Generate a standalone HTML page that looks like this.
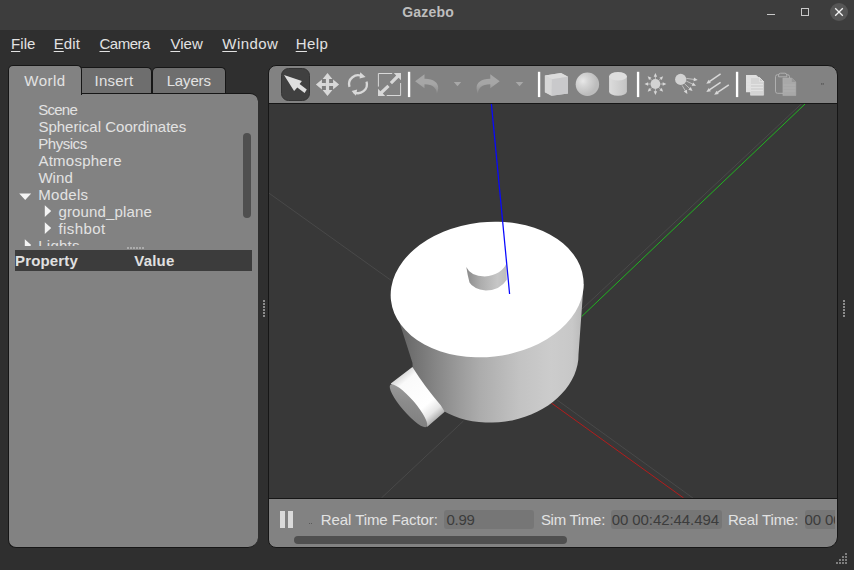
<!DOCTYPE html>
<html><head><meta charset="utf-8"><title>Gazebo</title>
<style>
*{box-sizing:border-box;margin:0;padding:0}
html,body{width:854px;height:570px;overflow:hidden;background:#2f2f2f}
body{position:relative;font-family:"Liberation Sans","DejaVu Sans",sans-serif;font-size:15px;color:#dcdcdc}
.abs{position:absolute}
.t{position:absolute;white-space:nowrap;line-height:17px;height:17px}
.t u{text-decoration:underline;text-underline-offset:2px;text-decoration-thickness:1px}
#titlebar{left:0;top:0;width:854px;height:30px;background:#3d3d3d}
#menubar{left:0;top:30px;width:854px;height:28px;background:#2f2f2f}
.tab{background:#6e6e6e;border:1px solid #161616;border-bottom:none;border-radius:5px 5px 0 0}
#tabWorld{left:8px;top:65px;width:74px;height:30px;background:#828282;z-index:3}
#tabInsert{left:78px;top:67px;width:74px;height:26px}
#tabLayers{left:152px;top:67px;width:74px;height:26px}
#leftpanel{left:8px;top:93px;width:250px;height:455px;background:#828282;border:1px solid #161616;border-right:none;border-radius:0 8px 10px 8px}
#rightpanel{left:268px;top:65px;width:570px;height:483px;background:#828282;border:1px solid #161616;border-radius:8px 10px 11px 8px}
#view{left:268px;top:103px;width:570px;height:396px;background:#383838;overflow:hidden;border:1px solid #161616}
#treeclip{left:0;top:0;width:854px;height:246px;overflow:hidden}
.field{background:#767676;border-radius:3px;height:19px;top:510px}
.sb{background:#4f4f4f;border-radius:4px}
.tri-r{width:0;height:0;border-left:6px solid #f2f2f2;border-top:5.5px solid transparent;border-bottom:5.5px solid transparent}
.tri-d{width:0;height:0;border-top:6px solid #f2f2f2;border-left:5.5px solid transparent;border-right:5.5px solid transparent}
</style></head><body>
<div id="titlebar" class="abs"></div>
<div class="t" style="left:402.2px;top:4.4px;letter-spacing:0.2px;color:#bebebe;font-weight:bold;font-size:14px">Gazebo</div>
<!-- window buttons -->
<div class="abs" style="left:767px;top:14px;width:8px;height:1px;background:#c8c8c8"></div>
<div class="abs" style="left:801px;top:8px;width:8px;height:8px;border:1px solid #c8c8c8"></div>
<div class="abs" style="left:830px;top:3px;width:18px;height:18px;border-radius:9px;background:#565656"></div>
<svg class="abs" style="left:830px;top:3px" width="18" height="18" viewBox="0 0 18 18"><path d="M5.2 5.2 L12.8 12.8 M12.8 5.2 L5.2 12.8" stroke="#f4f4f4" stroke-width="1.3" fill="none"/></svg>

<div id="menubar" class="abs"></div>
<div class="t" style="left:11px;top:35.2px;letter-spacing:0.09px;color:#e2e2e2"><u>F</u>ile</div><div class="t" style="left:53.7px;top:35.2px;letter-spacing:0.11px;color:#e2e2e2"><u>E</u>dit</div><div class="t" style="left:99.5px;top:35.2px;letter-spacing:-0.48px;color:#e2e2e2"><u>C</u>amera</div><div class="t" style="left:170.4px;top:35.2px;letter-spacing:0.06px;color:#e2e2e2"><u>V</u>iew</div><div class="t" style="left:222.3px;top:35.2px;letter-spacing:0.42px;color:#e2e2e2"><u>W</u>indow</div><div class="t" style="left:295.7px;top:35.2px;letter-spacing:0.43px;color:#e2e2e2"><u>H</u>elp</div>

<div id="leftpanel" class="abs"></div>
<div id="tabInsert" class="abs tab"></div>
<div id="tabLayers" class="abs tab"></div>
<div id="tabWorld" class="abs tab"></div>
<div class="t" style="left:24.3px;top:72.0px;letter-spacing:0.46px;color:#e2e2e2;z-index:4">World</div><div class="t" style="left:94.6px;top:72.0px;letter-spacing:0.21px;color:#e2e2e2">Insert</div><div class="t" style="left:166.7px;top:72.0px;letter-spacing:-0.16px;color:#e2e2e2">Layers</div>

<div id="treeclip" class="abs">
<div class="t" style="left:38.2px;top:101.3px;letter-spacing:-0.72px;color:#e2e2e2">Scene</div><div class="t" style="left:38.4px;top:118.3px;letter-spacing:0.01px;color:#e2e2e2">Spherical Coordinates</div><div class="t" style="left:38.2px;top:135.3px;letter-spacing:-0.45px;color:#e2e2e2">Physics</div><div class="t" style="left:38.4px;top:152.3px;letter-spacing:0.25px;color:#e2e2e2">Atmosphere</div><div class="t" style="left:38.4px;top:169.3px;letter-spacing:0.06px;color:#e2e2e2">Wind</div><div class="t" style="left:38.3px;top:186.3px;letter-spacing:0.29px;color:#e2e2e2">Models</div><div class="t" style="left:58.5px;top:203.3px;letter-spacing:0.14px;color:#e2e2e2">ground_plane</div><div class="t" style="left:58.5px;top:220.3px;letter-spacing:0.41px;color:#e2e2e2">fishbot</div><div class="t" style="left:38.3px;top:237.3px;letter-spacing:0.23px;color:#e2e2e2">Lights</div>
<svg class="abs" style="left:0;top:190px" width="60" height="60" viewBox="0 190 60 60" fill="#f4f4f4"><path d="M19.2 193.6H31.2L25.2 200ZM44.8 205.2L51.2 211.1L44.8 217ZM44.8 222.2L51.2 228.1L44.8 234ZM24.8 239.2L31.2 245.1L24.8 251Z"/></svg>
</div>
<div class="abs sb" style="left:243px;top:133px;width:8px;height:85px"></div>
<!-- splitter dots -->
<div class="abs" style="left:127px;top:247px;width:17px;height:2px;background:repeating-linear-gradient(90deg,#acacac 0 1.6px,transparent 1.6px 3px)"></div>
<div class="abs" style="left:15px;top:250px;width:237px;height:21px;background:#3c3c3c"></div>
<div class="t" style="left:15px;top:251.6px;letter-spacing:0.17px;color:#e0e0e0;font-weight:bold">Property</div><div class="t" style="left:134.3px;top:251.6px;letter-spacing:0.21px;color:#e0e0e0;font-weight:bold">Value</div>

<div id="rightpanel" class="abs"></div>
<div id="view" class="abs"><svg width="568" height="394" viewBox="269 104 568 394" style="display:block">
<defs>
<linearGradient id="gs" gradientUnits="userSpaceOnUse" x1="391" y1="0" x2="584" y2="0">
<stop offset="0" stop-color="#5c5c5c"/><stop offset="0.1" stop-color="#6e6e6e"/><stop offset="0.245" stop-color="#888888"/><stop offset="0.36" stop-color="#9c9c9c"/><stop offset="0.46" stop-color="#acacac"/><stop offset="0.67" stop-color="#c3c3c3"/><stop offset="0.83" stop-color="#cccccc"/><stop offset="0.94" stop-color="#c8c8c8"/><stop offset="1" stop-color="#b8b8b8"/>
</linearGradient>
<linearGradient id="gc" gradientUnits="userSpaceOnUse" x1="466" y1="0" x2="508" y2="0">
<stop offset="0" stop-color="#8a8a8a"/><stop offset="0.35" stop-color="#adadad"/><stop offset="0.75" stop-color="#c6c6c6"/><stop offset="1" stop-color="#bcbcbc"/>
</linearGradient>
<linearGradient id="gf" gradientUnits="userSpaceOnUse" x1="391" y1="385" x2="427" y2="426">
<stop offset="0" stop-color="#a0a0a0"/><stop offset="0.45" stop-color="#8b8b8b"/><stop offset="1" stop-color="#7c7c7c"/>
</linearGradient>
<linearGradient id="gw" gradientUnits="userSpaceOnUse" x1="404" y1="372" x2="440" y2="415">
<stop offset="0" stop-color="#d8d8d8"/><stop offset="0.15" stop-color="#fafafa"/><stop offset="0.7" stop-color="#ffffff"/><stop offset="0.88" stop-color="#e6e6e6"/><stop offset="1" stop-color="#b4b4b4"/>
</linearGradient>
</defs>
<g fill="none" stroke-width="1">
<path d="M269 193.2L391.3 280.5M463.4 421L381.4 498M556.7 399.7L692.9 498M802.3 103L582 309" stroke="#494949"/>
<path d="M806.1 103L581.7 316.5" stroke="#20b420" stroke-width="1"/>
<path d="M551.4 403L683.6 498" stroke="#b41c1c" stroke-width="1"/>
</g>
<path d="M390.7 295.1 L412.5 363.0 412.7 368.1 413.5 373.2 414.9 378.2 416.7 383.0 419.1 387.7 422.0 392.2 425.3 396.4 429.1 400.5 433.4 404.2 438.0 407.7 443.0 410.8 448.3 413.6 454.0 416.1 459.9 418.2 466.1 419.9 472.4 421.2 478.9 422.1 485.5 422.5 492.2 422.6 498.9 422.3 505.5 421.5 512.1 420.4 518.6 418.8 525.0 416.8 531.1 414.5 537.1 411.8 542.7 408.8 548.1 405.4 553.1 401.8 557.7 397.8 561.9 393.6 565.7 389.2 569.1 384.6 571.9 379.8 574.3 374.9 576.1 369.9 577.5 364.8 578.3 359.7 578.5 354.5 L583.6 284.0 Z" fill="url(#gs)"/>
<ellipse cx="487.15" cy="289.5" rx="96.8" ry="67.4" transform="rotate(-6.4 487.15 289.5)" fill="#ffffff"/>
<!-- wheel -->
<path d="M390.8 383.6L412.4 367Q419 377.5 425.7 386.5T440.9 405.5L444.7 411.8L427.3 426.8Z" fill="url(#gw)"/>
<ellipse cx="408.5" cy="405.7" rx="27.7" ry="6.7" transform="rotate(49.3 408.5 405.7)" fill="url(#gf)"/>
<!-- small cylinder -->
<path d="M466.3 267.1Q467.5 275 469.5 282.4Q473 288.6 485.8 290.5Q500 290.3 506.8 279.7L506.6 262.9Q502 274.5 484.7 276.6Q470.5 276.3 466.3 267.1Z" fill="url(#gc)"/>
<path d="M491.3 103L509.6 294" stroke="#0808ff" stroke-width="1.25" fill="none"/>
</svg></div>
<svg class="abs" style="left:270px;top:66px" width="567" height="37" viewBox="270 66 567 37">
<defs>
<radialGradient id="sph" gradientUnits="userSpaceOnUse" cx="583" cy="81" r="14"><stop offset="0" stop-color="#e8e8e8"/><stop offset="0.35" stop-color="#d6d6d6"/><stop offset="1" stop-color="#bcbcbc"/></radialGradient>
<linearGradient id="cyl" gradientUnits="userSpaceOnUse" x1="609" y1="0" x2="627" y2="0"><stop offset="0" stop-color="#dcdcdc"/><stop offset="0.5" stop-color="#d0d0d0"/><stop offset="1" stop-color="#c4c4c4"/></linearGradient>
<linearGradient id="fadeL" gradientUnits="userSpaceOnUse" x1="0" y1="84" x2="0" y2="94"><stop offset="0" stop-color="#a6a6a6"/><stop offset="1" stop-color="#a6a6a6" stop-opacity="0.25"/></linearGradient>
</defs>
<rect x="281.5" y="68.5" width="28" height="32" rx="7" ry="7" fill="#404040" stroke="#343434" stroke-width="1"/>
<path d="M284 75L301.9 81L299.6 83.9L306.8 89.6L304.6 93L297.3 87.4L294.1 90.9Z" fill="#dedede"/>
<rect x="322.3" y="79.3" width="10.4" height="10.4" fill="#7d7d7d"/>
<path d="M327.50 72.90L332.40 78.90L329.10 78.90L329.10 82.90L325.90 82.90L325.90 78.90L322.60 78.90ZM339.10 84.50L333.10 89.40L333.10 86.10L329.10 86.10L329.10 82.90L333.10 82.90L333.10 79.60ZM327.50 96.10L322.60 90.10L325.90 90.10L325.90 86.10L329.10 86.10L329.10 90.10L332.40 90.10ZM315.90 84.50L321.90 79.60L321.90 82.90L325.90 82.90L325.90 86.10L321.90 86.10L321.90 89.40Z" fill="#d8d8d8"/><rect x="325.85" y="82.85" width="3.3" height="3.3" fill="#d8d8d8"/>
<path d="M349.49 86.80A8.9 8.9 0 0 1 362.45 76.49" fill="none" stroke="#d8d8d8" stroke-width="2.3"/>
<path d="M366.51 81.60A8.9 8.9 0 0 1 353.55 91.91" fill="none" stroke="#d8d8d8" stroke-width="2.3"/>
<path d="M360.2 72.2L365.6 76.9L359.6 78.6Z" fill="#d8d8d8"/>
<path d="M355.8 95.8L351.6 90.9L357.2 89.6Z" fill="#d8d8d8"/>
<path d="M392.2 73.5H378.4V86.6M386.7 95.5H400.6V83" fill="none" stroke="#d8d8d8" stroke-width="1"/>
<path d="M393.8 73H401V80.2L398.6 77.8L392 84.2L389.8 82L396.2 75.4ZM378 88.8V96H385.2L382.8 93.6L389.6 87L387.4 84.8L380.4 91.2Z" fill="#d8d8d8"/>
<rect x="407.9" y="71.8" width="2.35" height="25.3" fill="#ffffff"/>
<rect x="537.9" y="71.8" width="2.35" height="25.3" fill="#ffffff"/>
<rect x="636.9" y="71.8" width="2.35" height="25.3" fill="#ffffff"/>
<rect x="735.9" y="71.8" width="2.35" height="25.3" fill="#ffffff"/>
<path d="M415.1 81.3L424.5 74.3V78.8C433 78.6 438.6 82.5 438.2 88.5C438 90.6 437.5 92.3 436.8 93.8C436.9 88.4 433 84.2 424.5 84.2V88.2Z" fill="url(#fadeL)"/>
<path d="M415.1 81.3L424.5 74.3V78.8C433 78.6 438.6 82.5 438.2 88.5C438 90.6 437.5 92.3 436.8 93.8C436.9 88.4 433 84.2 424.5 84.2V88.2Z" fill="url(#fadeL)" transform="translate(914.8 0) scale(-1 1)"/>
<path d="M453.8 82L461.2 82L457.5 86.3Z" fill="#a8a8a8"/>
<path d="M515.7 82L523.3 82L519.5 86.3Z" fill="#a8a8a8"/>
<path d="M544.9 75.5L561 73.1L568 76.8V93.6L551.6 95.8L544.9 92.3Z" fill="#d2d2d2"/>
<path d="M544.9 75.5L561 73.1L568 76.8L551.9 79.2Z" fill="#dcdcdc"/>
<path d="M544.9 75.5L551.9 79.2L551.6 95.8L544.9 92.3Z" fill="#d6d6d6"/>
<path d="M551.9 79.2L568 76.8L568 93.6L551.6 95.8Z" fill="#c9c9cb"/>
<circle cx="587.4" cy="84.3" r="11.7" fill="url(#sph)"/>
<path d="M609.1 76.3V91.5A8.9 4.3 0 0 0 626.9 91.5V76.3Z" fill="url(#cyl)"/>
<ellipse cx="618" cy="76.3" rx="8.9" ry="4.3" fill="#dedede"/>
<circle cx="655.4" cy="84.0" r="4.9" fill="#d2d2d2"/>
<path d="M660.40 84.00L663.20 84.00" stroke="#d8d8d8" stroke-width="0.7" fill="none"/><path d="M666.30 84.00L662.70 85.70L662.70 82.30Z" fill="#d8d8d8"/>
<path d="M658.94 87.54L660.92 89.52" stroke="#d8d8d8" stroke-width="0.7" fill="none"/><path d="M663.11 91.71L659.36 90.36L661.76 87.96Z" fill="#d8d8d8"/>
<path d="M655.40 89.00L655.40 91.80" stroke="#d8d8d8" stroke-width="0.7" fill="none"/><path d="M655.40 94.90L653.70 91.30L657.10 91.30Z" fill="#d8d8d8"/>
<path d="M651.86 87.54L649.88 89.52" stroke="#d8d8d8" stroke-width="0.7" fill="none"/><path d="M647.69 91.71L649.04 87.96L651.44 90.36Z" fill="#d8d8d8"/>
<path d="M650.40 84.00L647.60 84.00" stroke="#d8d8d8" stroke-width="0.7" fill="none"/><path d="M644.50 84.00L648.10 82.30L648.10 85.70Z" fill="#d8d8d8"/>
<path d="M651.86 80.46L649.88 78.48" stroke="#d8d8d8" stroke-width="0.7" fill="none"/><path d="M647.69 76.29L651.44 77.64L649.04 80.04Z" fill="#d8d8d8"/>
<path d="M655.40 79.00L655.40 76.20" stroke="#d8d8d8" stroke-width="0.7" fill="none"/><path d="M655.40 73.10L657.10 76.70L653.70 76.70Z" fill="#d8d8d8"/>
<path d="M658.94 80.46L660.92 78.48" stroke="#d8d8d8" stroke-width="0.7" fill="none"/><path d="M663.11 76.29L661.76 80.04L659.36 77.64Z" fill="#d8d8d8"/>
<circle cx="680.7" cy="79.4" r="5.6" fill="#d2d2d2"/>
<path d="M686.30 78.40L694.23 79.44" stroke="#d8d8d8" stroke-width="0.7" fill="none"/><path d="M697.70 79.90L693.50 81.16L693.97 77.59Z" fill="#d8d8d8"/>
<path d="M686.20 81.00L692.86 84.26" stroke="#d8d8d8" stroke-width="0.7" fill="none"/><path d="M696.00 85.80L691.62 85.66L693.20 82.42Z" fill="#d8d8d8"/>
<path d="M684.50 83.70L689.93 88.72" stroke="#d8d8d8" stroke-width="0.7" fill="none"/><path d="M692.50 91.10L688.34 89.71L690.79 87.06Z" fill="#d8d8d8"/>
<path d="M682.10 85.40L685.58 91.11" stroke="#d8d8d8" stroke-width="0.7" fill="none"/><path d="M687.40 94.10L683.78 91.62L686.86 89.75Z" fill="#d8d8d8"/>
<path d="M720.60 73.90L709.35 81.61" stroke="#d8d8d8" stroke-width="1.5" fill="none"/><path d="M706.30 83.70L708.69 79.76L710.84 82.89Z" fill="#d8d8d8"/>
<path d="M720.60 82.30L709.37 89.84" stroke="#d8d8d8" stroke-width="1.5" fill="none"/><path d="M706.30 91.90L708.73 87.98L710.85 91.14Z" fill="#d8d8d8"/>
<path d="M728.80 84.80L717.25 92.71" stroke="#d8d8d8" stroke-width="1.5" fill="none"/><path d="M714.20 94.80L716.59 90.86L718.74 93.99Z" fill="#d8d8d8"/>
<path d="M746 74.9H756.2L760.6 79V92.3H746Z" fill="#e0e0e0"/>
<path d="M750.5 77.6H759.6L763.6 81.6V95.2H750.5Z" fill="#d4d4d4" stroke="#e4e4e4" stroke-width="0.6"/>
<path d="M759.6 77.6V81.6H763.6Z" fill="#c6c6c6" stroke="#ececec" stroke-width="0.6"/>
<path d="M751 84.5H763M751 87.5H763M751 90.5H763M746.5 81H750M746.5 84H750M746.5 87H750" stroke="#e6e6e6" stroke-width="0.8" fill="none"/>
<rect x="775.5" y="74.7" width="14" height="18.6" rx="2" fill="none" stroke="#b4b4b4" stroke-width="0.9"/>
<path d="M778.6 76.8V75A2 2 0 0 1 780.6 73.2H784.8A2 2 0 0 1 786.8 75V76.8Z" fill="#828282" stroke="#b4b4b4" stroke-width="0.9"/>
<path d="M782.9 78H791.8L795.8 82V95.6H782.9Z" fill="#a8a8a8" stroke="#b2b2b2" stroke-width="0.5"/>
<path d="M791.8 78V82H795.8Z" fill="#969696"/>
<path d="M783.4 85H795.4M783.4 88H795.4M783.4 91H795.4" stroke="#b4b4b4" stroke-width="0.7" fill="none"/>
<rect x="821.1" y="83" width="1.1" height="1.8" fill="#5c5c5c"/><rect x="822.7" y="83" width="1.1" height="1.8" fill="#5c5c5c"/>
</svg>
<!-- bottom bar -->
<div class="abs" style="left:280px;top:511px;width:5px;height:17px;background:#dadada"></div>
<div class="abs" style="left:288px;top:511px;width:5px;height:17px;background:#dadada"></div>
<div class="abs" style="left:309px;top:523px;width:1px;height:1px;background:#5a5a5a"></div>
<div class="abs" style="left:311px;top:523px;width:1px;height:1px;background:#5a5a5a"></div>
<div class="t" style="left:320.8px;top:511.3px;letter-spacing:-0.08px;color:#e2e2e2">Real Time Factor:</div>
<div class="abs field" style="left:444px;width:90px"></div><div class="t" style="left:446.6px;top:511.3px;letter-spacing:-0.35px;color:#3c3c3c">0.99</div>
<div class="t" style="left:540.9px;top:511.3px;letter-spacing:-0.28px;color:#e2e2e2">Sim Time:</div>
<div class="abs field" style="left:610.5px;width:111px"></div><div class="t" style="left:611.7px;top:511.3px;letter-spacing:-0.08px;color:#3c3c3c">00 00:42:44.494</div>
<div class="t" style="left:727.9px;top:511.3px;letter-spacing:-0.13px;color:#e2e2e2">Real Time:</div>
<div class="abs field" style="left:805px;width:30px;border-radius:3px 0 0 3px"></div>
<div class="abs" style="left:805px;top:510px;width:30px;height:19px;overflow:hidden"><div class="t" style="left:-0.6px;top:1.1px;color:#3c3c3c;letter-spacing:-0.08px">00 00:42:44</div></div>
<div class="abs sb" style="left:294px;top:536px;width:273px;height:8px"></div>
<!-- splitter handles -->
<div class="abs" style="left:263px;top:300px;width:2px;height:17px;background:repeating-linear-gradient(180deg,#8c8c8c 0 2px,transparent 2px 3px)"></div>
<div class="abs" style="left:843px;top:300px;width:2px;height:17px;background:repeating-linear-gradient(180deg,#8c8c8c 0 2px,transparent 2px 3px)"></div>
<!-- size grip -->
<svg class="abs" style="left:834px;top:551px" width="16" height="16" viewBox="834 551 16 16" fill="#7e7e7e"><rect x="845" y="553" width="2" height="2"/><rect x="842" y="556" width="2" height="2"/><rect x="845" y="556" width="2" height="2"/><rect x="839" y="559" width="2" height="2"/><rect x="842" y="559" width="2" height="2"/><rect x="845" y="559" width="2" height="2"/><rect x="836" y="562" width="2" height="2"/><rect x="839" y="562" width="2" height="2"/><rect x="842" y="562" width="2" height="2"/><rect x="845" y="562" width="2" height="2"/></svg>
</body></html>
